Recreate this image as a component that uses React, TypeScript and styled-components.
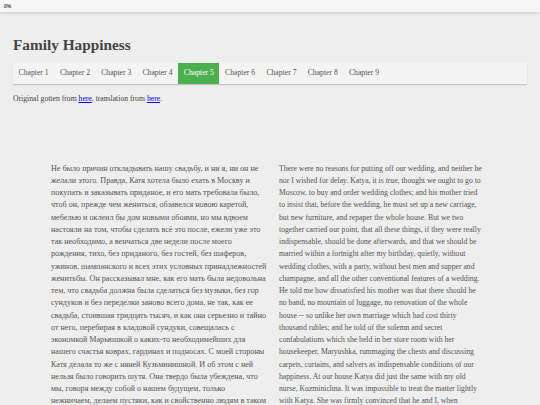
import React from 'react';
import styled, { createGlobalStyle } from 'styled-components';

const GlobalStyle = createGlobalStyle`
  html, body {
    margin: 0;
    padding: 0;
    background: #eeeeee;
    font-family: "Liberation Serif", "Times New Roman", serif;
    color: #555;
  }
`;

const ProgressBar = styled.div`
  height: 12px;
  background: #f6f6f6;
  box-shadow: 0 1px 3px rgba(0, 0, 0, 0.15);
  display: flex;
  align-items: center;
  padding: 0 4px;
  font-family: "Liberation Sans", Arial, sans-serif;
  font-size: 5px;
  font-weight: bold;
  color: #444;
`;

const Page = styled.main`
  padding: 0 13px;
`;

const Title = styled.h1`
  margin: 23px 0 8px;
  font-size: 15.3px;
  line-height: 20px;
  color: #444;
`;

const ChapterNav = styled.nav`
  display: flex;
  width: 100%;
  background: #f4f4f4;
  box-shadow: 0 1px 1px rgba(0, 0, 0, 0.18);
`;

const ChapterLink = styled.a<{ $active?: boolean }>`
  padding: 0 5.6px;
  font-size: 7.7px;
  line-height: 20.5px;
  color: ${p => (p.$active ? '#fff' : '#555')};
  background: ${p => (p.$active ? '#4caf50' : 'transparent')};
  text-decoration: none;
`;

const Source = styled.p`
  margin: 9px 0 0;
  font-size: 7.7px;
  line-height: 12px;
  color: #444;

  a {
    color: #0000ee;
  }
`;

const Columns = styled.div`
  display: grid;
  grid-template-columns: 218px 204px;
  column-gap: 10px;
  margin: 58px 0 0 38px;
`;

const Text = styled.p<{ $wide?: boolean }>`
  margin: 0;
  font-size: ${p => (p.$wide ? '8.1px' : '7.7px')};
  line-height: 12.25px;
  color: #555;
`;

const chapters = [1, 2, 3, 4, 5, 6, 7, 8, 9];

const russianStart =
  'Не было причин откладывать нашу свадьбу, и ни я, ни он не желали этого. Правда, Катя хотела было ехать в Москву и покупать и заказывать приданое, и его мать требовала было, чтоб он, прежде чем жениться, обзавелся новою каретой, мебелью и оклеил бы дом новыми обоями, но мы вдвоем настояли на том, чтобы сделать всё это после, ежели уже это так необходимо, а венчаться две недели после моего рождения, тихо, без приданого, без гостей, без шаферов, ужинов, шампанского и всех этих условных принадлежностей женитьбы. Он рассказывал мне, как его мать была недовольна тем, что свадьба должна была сделаться без музыки, без гор сундуков и без переделки заново всего дома, не так, как ее свадьба, стоившая тридцать тысяч, и как она серьезно и тайно от него, перебирая в кладовой сундуки, совещалась с экономкой Марьюшкой о каких-то необходимейших для нашего счастья коврах, гардинах и подносах. С моей стороны Катя делала то же с няней Кузьминишной. И об этом с ней нельзя было говорить шутя. Она твердо была убеждена, что мы, говоря между собой о нашем будущем, только';

const russianEnd = 'нежничаем, делаем пустяки, как и свойственно людям в таком положении.';

const englishStart =
  'There were no reasons for putting off our wedding, and neither he nor I wished for delay. Katya, it is true, thought we ought to go to Moscow, to buy and order wedding clothes; and his mother tried to insist that, before the wedding, he must set up a new carriage, but new furniture, and repaper the whole house. But we two together carried our point, that all these things, if they were really indispensable, should be done afterwards, and that we should be married within a fortnight after my birthday, quietly, without wedding clothes, with a party, without best men and supper and champagne, and all the other conventional features of a wedding. He told me how dissatisfied his mother was that there should be no band, no mountain of luggage, no renovation of the whole house -- so unlike her own marriage which had cost thirty thousand rubles; and he told of the solemn and secret confabulations which she held in her store room with her housekeeper, Maryushka, rummaging the chests and discussing carpets, curtains, and salvers as indispensable conditions of our happiness. At our house Katya did just the same with my old nurse, Kuzminichna. It was impossible to treat the matter lightly with Katya. She was firmly convinced that he and I, when';

const englishEnd = 'talking together about our future, were merely exchanging sentiments.';

export default function App() {
  return (
    <>
      <GlobalStyle />
      <ProgressBar>0%</ProgressBar>
      <Page>
        <Title>Family Happiness</Title>
        <ChapterNav>
          {chapters.map(n => (
            <ChapterLink key={n} href="#" $active={n === 5}>
              Chapter {n}
            </ChapterLink>
          ))}
        </ChapterNav>
        <Source>
          Original gotten from <a href="#">here</a>, translation from <a href="#">here</a>.
        </Source>
        <Columns>
          <Text $wide>
            {russianStart}
            <br />
            {russianEnd}
          </Text>
          <Text>
            {englishStart}
            <br />
            {englishEnd}
          </Text>
        </Columns>
      </Page>
    </>
  );
}
